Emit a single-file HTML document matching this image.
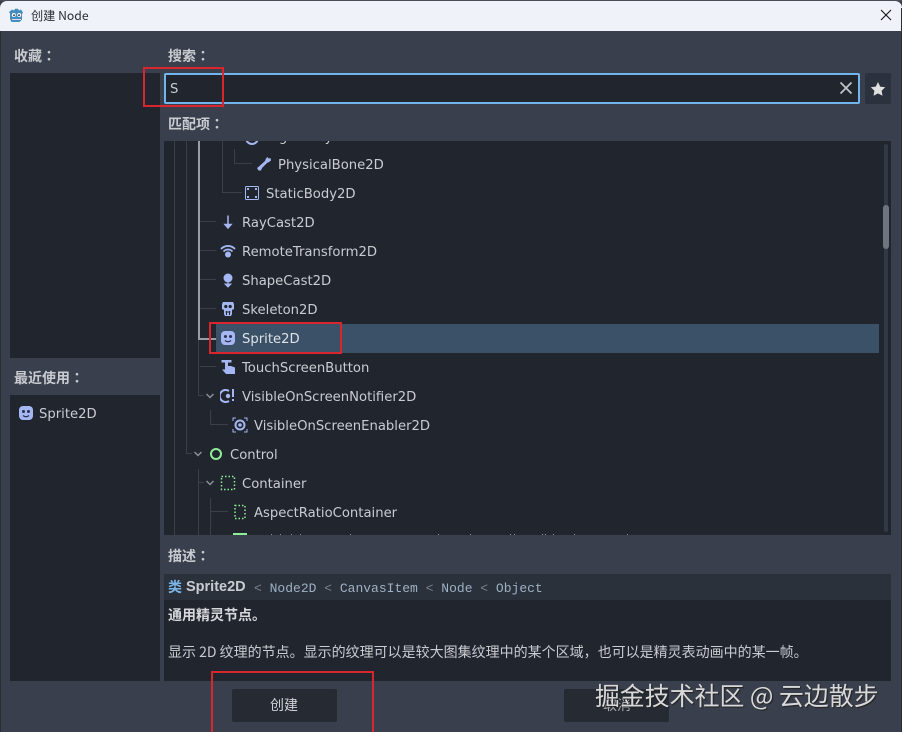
<!DOCTYPE html>
<html><head><meta charset="utf-8">
<style>
*{margin:0;padding:0;box-sizing:border-box}
html,body{width:902px;height:732px;overflow:hidden;background:#393f4c}
body{position:relative;font-family:"DejaVu Sans","Noto Sans CJK SC",sans-serif;color:#cfd2d6}
.a{position:absolute}
.t{position:absolute;white-space:nowrap;font-size:13.2px;line-height:20px;color:#c9ccd1}
.l{position:absolute;white-space:nowrap;font-family:"Noto Sans CJK SC",sans-serif;font-weight:700;font-size:14px;line-height:20px;color:#c8cbd0}
.l span{font-family:"Noto Sans CJK TC",sans-serif}
.p{position:absolute;background:#21262e}
.v{position:absolute;width:1px;background:#3a404b}
.h{position:absolute;height:1px;background:#3a404b}
.i{position:absolute;width:16px;height:16px}
.z{position:absolute;font-family:"Noto Sans CJK SC",sans-serif;white-space:nowrap}
.r{position:absolute;border:2px solid #d9252e}
.d{position:absolute;top:534px;width:1px;height:1px;background:#8d9096}
</style></head><body>
<div class="a" style="left:0;top:0;width:902px;height:1px;background:#4a4d55"></div>
<div class="a" style="left:0;top:1px;width:902px;height:30px;background:#eff3f9;border-radius:7px 7px 0 0"></div>
<svg class="a" style="left:9px;top:7px;width:15px;height:16px" viewBox="0 0 15 16"><path d="M3 2.500l2 1 1-1.800h3l1 1.800 2-1 2 3-1 1.500v5.500l-2.500 2.500h-8L1 12V6.500L0 5z" fill="#478cbf"/><circle cx="4.800" cy="8" r="2" fill="#fff"/><circle cx="10.200" cy="8" r="2" fill="#fff"/><circle cx="5" cy="8.200" r="1" fill="#2f4a60"/><circle cx="10" cy="8.200" r="1" fill="#2f4a60"/><path d="M3 12.500h9" stroke="#cfe0ee" stroke-width="1"/></svg>
<div class="z" style="left:31px;top:6px;font-size:12.200px;line-height:18px;color:#2a2d33">创建 Node</div>
<svg class="a" style="left:880px;top:9px;width:12px;height:12px" viewBox="0 0 12 12"><path d="M1 1l10 10M11 1L1 11" stroke="#111" stroke-width="1.100" fill="none"/></svg>

<div class="l" style="left:14px;top:46px">收藏<span>：</span></div>
<div class="l" style="left:168px;top:46px">搜索<span>：</span></div>
<div class="l" style="left:168px;top:114px">匹配项<span>：</span></div>
<div class="l" style="left:14px;top:368px">最近使用<span>：</span></div>
<div class="l" style="left:168px;top:546px">描述<span>：</span></div>

<div class="p" style="left:10px;top:73px;width:150px;height:285px"></div>
<div class="p" style="left:10px;top:395px;width:150px;height:286px"></div>
<svg class="i" style="left:18px;top:405px" viewBox="0 0 16 16"><rect x="1" y="1" width="14" height="14" rx="4" fill="#a5b7f3"/><circle cx="5.500" cy="6.500" r="1.500" fill="#2b3050"/><circle cx="10.500" cy="6.500" r="1.500" fill="#2b3050"/><path d="M5 10.500q3 2.500 6 0" stroke="#2b3050" fill="none" stroke-width="1.200"/></svg>
<div class="t" style="left:39px;top:405px">Sprite2D</div>

<div class="a" style="left:164px;top:73px;width:696px;height:31px;background:#21262e;border:2px solid #70b5ec;border-radius:2px"></div>
<div class="t" style="left:170px;top:80px">S</div>
<svg class="a" style="left:839px;top:81px;width:14px;height:14px" viewBox="0 0 14 14"><path d="M1.500 1.500l11 11M12.500 1.500l-11 11" stroke="#c2c5ca" stroke-width="1.700" fill="none"/></svg>
<div class="a" style="left:865px;top:73px;width:26px;height:31px;background:#2c323d;border-radius:2px"></div>
<svg class="a" style="left:870px;top:81px;width:16px;height:16px" viewBox="0 0 16 16"><path d="M8 1l2.200 4.600 5 .7-3.600 3.500.9 5L8 12.400l-4.500 2.400.9-5L.8 6.300l5-.7z" fill="#e0e0e0"/></svg>

<div class="p" style="left:164px;top:141px;width:727px;height:394px;overflow:hidden">
  <div class="t" style="left:102px;top:-13px">RigidBody2D</div>
  <svg class="i" style="left:80px;top:-11px" viewBox="0 0 16 16"><circle cx="8" cy="8" r="6" fill="none" stroke="#a5b7f3" stroke-width="2"/></svg>
</div>
<div class="a" style="left:884px;top:144px;width:4px;height:388px;background:#333944;border-radius:2px"></div>
<div class="a" style="left:883px;top:205px;width:6px;height:44px;background:#6f757e;border-radius:3px"></div>

<div class="a" style="left:216px;top:324px;width:663px;height:29px;background:#3a5168"></div>

<!-- tree lines -->
<div class="v" style="left:174px;top:141px;height:394px"></div>
<div class="v" style="left:186px;top:141px;height:313px"></div>
<div class="h" style="left:186px;top:453px;width:6px"></div>
<div class="a" style="left:198px;top:141px;width:2px;height:198px;background:#9a9da3"></div>
<div class="a" style="left:198px;top:338px;width:18px;height:2px;background:#9a9da3"></div>
<div class="v" style="left:198px;top:340px;height:56px"></div>
<div class="v" style="left:222px;top:141px;height:52px"></div>
<div class="h" style="left:222px;top:192px;width:20px"></div>
<div class="v" style="left:234px;top:149px;height:15px"></div>
<div class="h" style="left:234px;top:163px;width:18px"></div>
<div class="h" style="left:200px;top:221px;width:16px"></div>
<div class="h" style="left:200px;top:250px;width:16px"></div>
<div class="h" style="left:200px;top:279px;width:16px"></div>
<div class="h" style="left:200px;top:308px;width:16px"></div>
<div class="h" style="left:200px;top:366px;width:16px"></div>
<div class="h" style="left:198px;top:395px;width:6px"></div>
<div class="v" style="left:210px;top:410px;height:15px"></div>
<div class="h" style="left:210px;top:424px;width:18px"></div>
<div class="v" style="left:198px;top:469px;height:66px"></div>
<div class="h" style="left:198px;top:482px;width:6px"></div>
<div class="v" style="left:210px;top:498px;height:37px"></div>
<div class="h" style="left:210px;top:511px;width:18px"></div>

<!-- chevrons -->
<svg class="a" style="left:205px;top:392px;width:10px;height:8px" viewBox="0 0 10 8"><path d="M1.500 2l3.500 3.500L8.500 2" stroke="#8a8e95" stroke-width="1.500" fill="none"/></svg>
<svg class="a" style="left:193px;top:450px;width:10px;height:8px" viewBox="0 0 10 8"><path d="M1.500 2l3.500 3.500L8.500 2" stroke="#8a8e95" stroke-width="1.500" fill="none"/></svg>
<svg class="a" style="left:205px;top:479px;width:10px;height:8px" viewBox="0 0 10 8"><path d="M1.500 2l3.500 3.500L8.500 2" stroke="#8a8e95" stroke-width="1.500" fill="none"/></svg>

<!-- icons -->
<svg class="i" style="left:256px;top:156px" viewBox="0 0 16 16"><path d="M2.500 14.500L1 12l2-1.500 1-1 5-4.500 1-2.500L11.500 1l1 1.500 2-.5.5 2.500-2 1.500-2 1-5 5-1 2.500z" fill="#a5b7f3"/></svg>
<svg class="i" style="left:244px;top:185px" viewBox="0 0 16 16"><rect x="1.500" y="1.500" width="13" height="13" rx="1" fill="none" stroke="#a5b7f3" stroke-width="1"/><rect x="3" y="3" width="2" height="2" fill="#a5b7f3"/><rect x="11" y="3" width="2" height="2" fill="#a5b7f3"/><rect x="3" y="11" width="2" height="2" fill="#a5b7f3"/><rect x="11" y="11" width="2" height="2" fill="#a5b7f3"/></svg>
<svg class="i" style="left:220px;top:214px" viewBox="0 0 16 16"><path d="M8 1.500v10M5 10.500L8 14l3-3.500z" stroke="#a5b7f3" stroke-width="1.500" fill="#a5b7f3"/></svg>
<svg class="i" style="left:220px;top:243px" viewBox="0 0 16 16"><path d="M1 6a9.500 9.500 0 0 1 14 0M3.500 8.500a6 6 0 0 1 9 0" stroke="#a5b7f3" stroke-width="1.800" fill="none"/><circle cx="8" cy="11.500" r="3" fill="#a5b7f3"/></svg>
<svg class="i" style="left:220px;top:272px" viewBox="0 0 16 16"><circle cx="8" cy="6" r="4.500" fill="#a5b7f3"/><path d="M8 10v4M5 12l3 3 3-3z" stroke="#a5b7f3" fill="#a5b7f3"/></svg>
<svg class="i" style="left:220px;top:301px" viewBox="0 0 16 16"><path d="M3 1h10l1 2v5l-2 1v4l-1 2H5l-1-2V9L2 8V3z" fill="#a5b7f3"/><circle cx="5.800" cy="5.500" r="1.600" fill="#21262e"/><circle cx="10.200" cy="5.500" r="1.600" fill="#21262e"/><path d="M5.500 11h5M6.500 10v4M9.500 10v4" stroke="#21262e"/></svg>
<svg class="i" style="left:220px;top:330px" viewBox="0 0 16 16"><rect x="1" y="1" width="14" height="14" rx="4" fill="#a5b7f3"/><circle cx="5.500" cy="6.500" r="1.500" fill="#2b3050"/><circle cx="10.500" cy="6.500" r="1.500" fill="#2b3050"/><path d="M5 10.500q3 2.500 6 0" stroke="#2b3050" fill="none" stroke-width="1.200"/></svg>
<svg class="i" style="left:220px;top:359px" viewBox="0 0 16 16"><path d="M1.500 1h10v2.500H8V7h3l4 1.500V15H6L2 10.500h3V3.500H1.500z" fill="#a5b7f3"/></svg>
<svg class="i" style="left:220px;top:388px" viewBox="0 0 16 16"><path d="M9 3a6 6 0 1 0 0 10" stroke="#a5b7f3" stroke-width="2" fill="none"/><circle cx="8" cy="8" r="2.200" fill="#a5b7f3"/><path d="M13 1v8M13 11v2" stroke="#a5b7f3" stroke-width="2"/></svg>
<svg class="i" style="left:232px;top:417px" viewBox="0 0 16 16"><circle cx="8" cy="8" r="4.500" fill="none" stroke="#a5b7f3" stroke-width="2"/><circle cx="8" cy="8" r="1.800" fill="#a5b7f3"/><path d="M1 4V1h3M12 1h3v3M15 12v3h-3M4 15H1v-3" stroke="#a5b7f3" fill="none"/></svg>
<svg class="i" style="left:208px;top:446px" viewBox="0 0 16 16"><circle cx="8" cy="8" r="5" fill="none" stroke="#8eef97" stroke-width="2"/></svg>
<svg class="i" style="left:220px;top:475px" viewBox="0 0 16 16"><rect x="1.500" y="1.500" width="13" height="13" fill="none" stroke="#8eef97" stroke-width="1.500" stroke-dasharray="1.500 2"/></svg>
<svg class="i" style="left:232px;top:504px" viewBox="0 0 16 16"><rect x="3" y="1.500" width="10" height="13" fill="none" stroke="#8eef97" stroke-width="1.500" stroke-dasharray="1.500 2"/></svg>
<div class="a" style="left:233px;top:533px;width:14px;height:2px;background:#8eef97"></div>

<!-- clipped row tops -->
<div class="d" style="left:271px"></div><div class="d" style="left:280px"></div><div class="d" style="left:291px"></div><div class="d" style="left:300px"></div><div class="d" style="left:350px"></div><div class="d" style="left:438px"></div><div class="d" style="left:470px"></div><div class="d" style="left:510px"></div><div class="d" style="left:514px"></div><div class="d" style="left:542px"></div><div class="d" style="left:545px"></div><div class="d" style="left:553px"></div><div class="d" style="left:574px"></div><div class="d" style="left:627px"></div>

<!-- labels -->
<div class="t" style="left:278px;top:156px">PhysicalBone2D</div>
<div class="t" style="left:266px;top:185px">StaticBody2D</div>
<div class="t" style="left:242px;top:214px">RayCast2D</div>
<div class="t" style="left:242px;top:243px">RemoteTransform2D</div>
<div class="t" style="left:242px;top:272px">ShapeCast2D</div>
<div class="t" style="left:242px;top:301px">Skeleton2D</div>
<div class="t" style="left:242px;top:330px;color:#dfe2e6">Sprite2D</div>
<div class="t" style="left:242px;top:359px">TouchScreenButton</div>
<div class="t" style="left:242px;top:388px">VisibleOnScreenNotifier2D</div>
<div class="t" style="left:254px;top:417px">VisibleOnScreenEnabler2D</div>
<div class="t" style="left:230px;top:446px">Control</div>
<div class="t" style="left:242px;top:475px">Container</div>
<div class="t" style="left:254px;top:504px">AspectRatioContainer</div>

<!-- description -->
<div class="a" style="left:164px;top:574px;width:727px;height:26px;background:#2b313b"></div>
<div class="p" style="left:164px;top:600px;width:727px;height:81px"></div>
<div class="z" style="left:168px;top:578px;font-size:14px;line-height:18px;color:#7db4e8;font-weight:700">类</div>
<div class="t" style="left:186px;top:578px;font-weight:700;font-size:14.500px;line-height:18px;color:#c9ccd1;font-family:'Liberation Sans',sans-serif">Sprite2D</div>
<div class="a" style="left:254px;top:580px;font:13px/18px 'Liberation Mono',monospace;color:#9db0c4;white-space:nowrap"><span style="color:#7c8289">&lt;</span> Node2D <span style="color:#7c8289">&lt;</span> CanvasItem <span style="color:#7c8289">&lt;</span> Node <span style="color:#7c8289">&lt;</span> Object</div>
<div class="z" style="left:168px;top:605px;font-size:14px;line-height:20px;font-weight:700;color:#d6d8db">通用精灵节点。</div>
<div class="z" style="left:168px;top:642px;font-size:14px;line-height:20px;color:#c9ccd1">显示 2D 纹理的节点。显示的纹理可以是较大图集纹理中的某个区域，也可以是精灵表动画中的某一帧。</div>

<!-- buttons -->
<div class="a" style="left:232px;top:689px;width:105px;height:33px;background:#252a33;border-radius:2px"></div>
<div class="z" style="left:270px;top:696px;font-size:14px;line-height:19px;color:#cfd2d6">创建</div>
<div class="a" style="left:564px;top:689px;width:105px;height:33px;background:#252a33;border-radius:2px"></div>
<div class="z" style="left:603px;top:696px;font-size:14px;line-height:19px;color:#a8abb0">取消</div>

<!-- window edges -->
<div class="a" style="left:0;top:31px;width:1px;height:701px;background:#2a2e36"></div>
<div class="a" style="left:901px;top:8px;width:1px;height:724px;background:#2a2e36"></div>

<!-- watermark -->
<div class="z" style="left:595px;top:679px;font-size:24.900px;line-height:32px;color:#d8d8d8;text-shadow:1px 1px 1px #222">掘金技术社区 @ 云边散步</div>

<!-- red rects -->
<div class="r" style="left:143px;top:67px;width:81px;height:40px"></div>
<div class="r" style="left:209px;top:322px;width:133px;height:32px"></div>
<div class="r" style="left:211px;top:671px;width:163px;height:63px"></div>
</body></html>
